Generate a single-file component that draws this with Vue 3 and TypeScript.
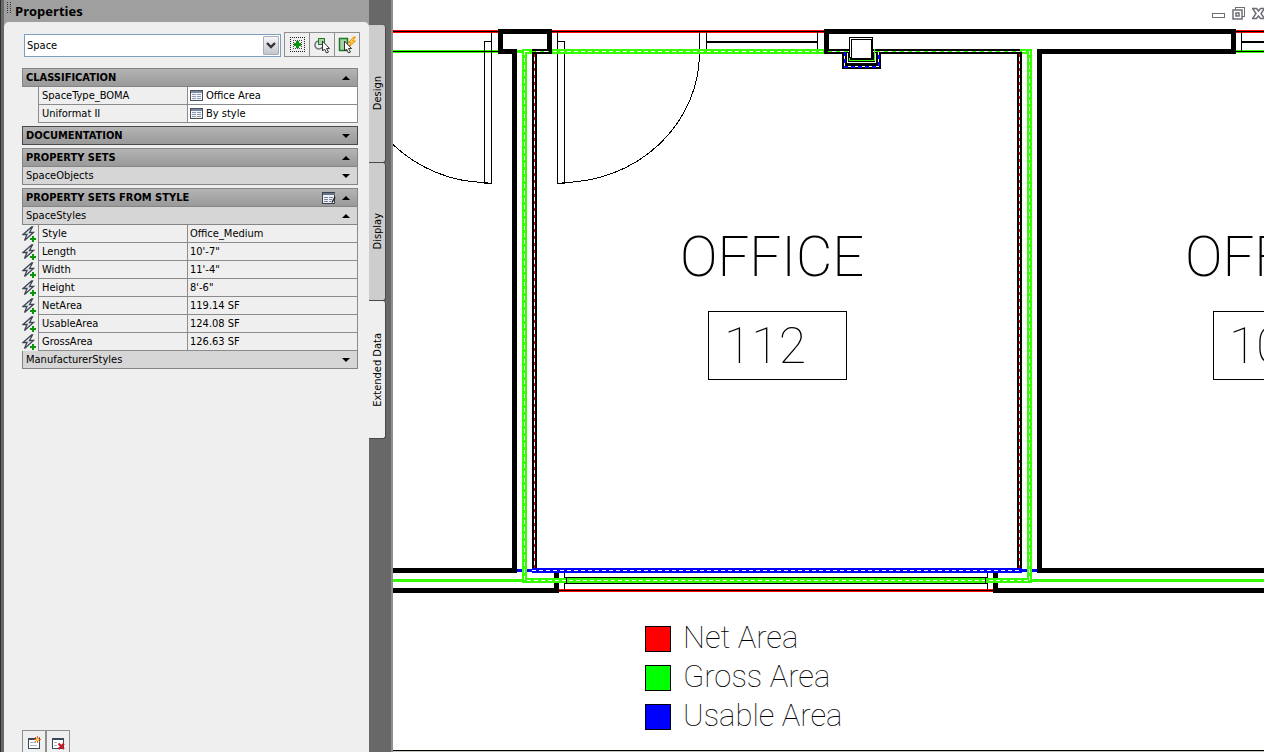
<script setup lang="ts">
import { ref } from 'vue'

interface Row { label: string; value: string }

const tabs = ['Design', 'Display', 'Extended Data']
const activeTab = ref('Extended Data')
const objectType = ref('Space')

const classification: Row[] = [
  { label: 'SpaceType_BOMA', value: 'Office Area' },
  { label: 'Uniformat II', value: 'By style' },
]

const spaceStyles: Row[] = [
  { label: 'Style', value: 'Office_Medium' },
  { label: 'Length', value: '10\'-7"' },
  { label: 'Width', value: '11\'-4"' },
  { label: 'Height', value: '8\'-6"' },
  { label: 'NetArea', value: '119.14 SF' },
  { label: 'UsableArea', value: '124.08 SF' },
  { label: 'GrossArea', value: '126.63 SF' },
]

const legend = [
  { label: 'Net Area', color: '#ff0000', y: 626 },
  { label: 'Gross Area', color: '#00ff00', y: 665 },
  { label: 'Usable Area', color: '#0000ff', y: 704 },
]
</script>

<template>
  <div class="app">
    <aside class="palette">
      <div class="main">
        <header class="title">
          <svg class="grip" width="5" height="12" aria-hidden="true" shape-rendering="crispEdges">
            <path d="M.5 0V12M3.5 0V12" stroke="#333" stroke-dasharray="1 1" />
          </svg>
          <h1>Properties</h1>
        </header>

        <div class="body">
          <div class="tools">
            <div class="combo">
              <select v-model="objectType" aria-label="Object type">
                <option>Space</option>
              </select>
              <span class="drop">
                <svg width="10" height="7" viewBox="0 0 10 7" aria-hidden="true"><path d="M1 1L5 5L9 1" fill="none" stroke="#333" stroke-width="2.4" /></svg>
              </span>
            </div>
            <div class="buttons">
              <button type="button" aria-label="Toggle pick add">
                <svg width="17" height="17" viewBox="0 0 17 17" shape-rendering="crispEdges">
                  <path d="M1 1.500H16M1 15.500H16M1.500 1V16M15.500 1V16" stroke="#222" stroke-dasharray="1 1" />
                  <path d="M4 4.500H13M4 12.500H13M4.500 4V13M12.500 4V13" stroke="#444" stroke-dasharray="1 1" />
                  <path d="M8.500 5V12M5 8.500H12" stroke="#0a960a" stroke-width="3" />
                </svg>
              </button>
              <button type="button" aria-label="Select objects">
                <svg width="18" height="18" viewBox="0 0 18 18">
                  <path d="M5.500 5A4 4 0 1 0 9 11.500" fill="none" stroke="#6f7480" stroke-width="1.500" />
                  <rect x="5.500" y="2.500" width="6" height="6" fill="#a9d3a4" stroke="#1d7a29" />
                  <path d="M9.500 5V15L11.500 13L13.500 17L15.500 16L13.500 12.500H16.500Z" fill="#fff" stroke="#333" />
                </svg>
              </button>
              <button type="button" aria-label="Quick select">
                <svg width="18" height="18" viewBox="0 0 18 18">
                  <rect x="1.500" y="2.500" width="8" height="12" fill="#a9d3a4" stroke="#1d7a29" stroke-width="1.500" />
                  <path d="M15.500 1L10.500 6.500H13L10.500 11.500L17.500 5H14.500L17.500 1Z" fill="#ffd83a" stroke="#f08a00" />
                  <path d="M6.500 5V15L8.500 13L10.500 17L12.500 16L10.500 12.500H13.500Z" fill="#fff" stroke="#333" />
                </svg>
              </button>
            </div>
          </div>

          <div class="sets">
            <section>
              <button type="button" class="head" aria-expanded="true">
                <span>CLASSIFICATION</span><i class="arrow up"></i>
              </button>
              <table>
                <tbody>
                  <tr v-for="row in classification" :key="row.label">
                    <td class="mark"></td>
                    <th scope="row">{{ row.label }}</th>
                    <td class="editable">
                      <div class="value">
                        <svg width="13" height="11" viewBox="0 0 13 11" aria-hidden="true" shape-rendering="crispEdges">
                          <rect x=".5" y=".5" width="12" height="10" fill="#f4f6fa" stroke="#4a4f58" />
                          <path d="M1 2H12" stroke="#7c89a3" stroke-width="2" />
                          <path d="M2 4.500H6M7 4.500H11M2 6.500H6M7 6.500H11M2 8.500H6M7 8.500H11" stroke="#8d9bb5" />
                        </svg>
                        {{ row.value }}
                      </div>
                    </td>
                  </tr>
                </tbody>
              </table>
            </section>

            <section>
              <button type="button" class="head dark" aria-expanded="false">
                <span>DOCUMENTATION</span><i class="arrow down"></i>
              </button>
            </section>

            <section>
              <button type="button" class="head" aria-expanded="true">
                <span>PROPERTY SETS</span><i class="arrow up"></i>
              </button>
              <button type="button" class="sub" aria-expanded="false">
                <span>SpaceObjects</span><i class="arrow down"></i>
              </button>
            </section>

            <section>
              <button type="button" class="head" aria-expanded="true">
                <span>PROPERTY SETS FROM STYLE</span>
                <svg class="sheet" width="14" height="12" viewBox="0 0 14 12" aria-hidden="true">
                  <rect x=".5" y=".5" width="12" height="11" fill="#eef0f5" stroke="#3d434d" />
                  <path d="M1 2H13" stroke="#66738c" stroke-width="2" />
                  <path d="M2 5.500H6M7 5.500H11M2 7.500H6M7 7.500H10M2 9.500H6M7 9.500H9" stroke="#7785a0" />
                  <path d="M13 5L10 10.500" stroke="#222" stroke-width="1.500" />
                </svg>
                <i class="arrow up"></i>
              </button>
              <button type="button" class="sub" aria-expanded="true">
                <span>SpaceStyles</span><i class="arrow up"></i>
              </button>
              <table>
                <tbody>
                  <tr v-for="row in spaceStyles" :key="row.label">
                    <td class="mark">
                      <svg width="15" height="17" viewBox="0 0 15 17" aria-hidden="true">
                        <path d="M9.500 1L1 8.500H5L2.500 14.500L11.500 6.500H7.500L10.500 1Z" fill="#e3e9f3" stroke="#3f4652" stroke-width="1.300" />
                        <path d="M11 10V16M8 13H14" stroke="#089608" stroke-width="2" />
                      </svg>
                    </td>
                    <th scope="row">{{ row.label }}</th>
                    <td>{{ row.value }}</td>
                  </tr>
                </tbody>
              </table>
              <button type="button" class="sub" aria-expanded="false">
                <span>ManufacturerStyles</span><i class="arrow down"></i>
              </button>
            </section>
          </div>

          <footer class="foot">
            <button type="button" aria-label="Add property sets">
              <svg width="14" height="15" viewBox="0 0 14 15">
                <rect x="1.500" y="3.500" width="11" height="10" fill="#fff" stroke="#3b4a5c" />
                <path d="M1 4H13" stroke="#3b4a5c" stroke-width="2" />
                <path d="M3 7.500H9M3 10.500H10" stroke="#aab3cb" />
                <path d="M10.500 1V8M7 4.500H14M8 2L13 7M13 2L8 7" stroke="#e8561b" />
                <circle cx="10.500" cy="4.500" r="1.500" fill="#ffe24a" />
              </svg>
            </button>
            <button type="button" aria-label="Remove property sets">
              <svg width="14" height="15" viewBox="0 0 14 15">
                <rect x="1.500" y="3.500" width="11" height="10" fill="#fff" stroke="#3b4a5c" />
                <path d="M1 4H13" stroke="#3b4a5c" stroke-width="2" />
                <path d="M3 7.500H6M3 10.500H6" stroke="#aab3cb" />
                <path d="M7.500 8.500L13 14M13 8.500L7.500 14" stroke="#c81423" stroke-width="2" />
              </svg>
            </button>
          </footer>
        </div>
      </div>

      <div class="rail" role="tablist" aria-orientation="vertical">
        <button
          v-for="tab in tabs"
          :key="tab"
          type="button"
          role="tab"
          :aria-selected="tab === activeTab"
          :class="{ active: tab === activeTab }"
          @click="activeTab = tab"
        ><span>{{ tab }}</span></button>
      </div>
    </aside>

    <main class="drawing">
      <svg class="plan" role="img" aria-label="Floor plan of office 112">
        <g transform="translate(-393 0)">
          <!-- outer wall lines -->
          <g shape-rendering="crispEdges">
            <path class="red3" d="M393 31.500H825M1236 31.500H4000" />
            <path class="thin" d="M393 31.500H825M1236 31.500H4000" />
            <path class="green3" d="M393 51.500H524M1236 51.500H4000" />
            <path class="thin" d="M393 51.500H500M1236 51.500H4000" />
            <path class="thin" d="M1241.500 32V51M699.500 32V52M706.500 32V50M817.500 32V50" />
            <path class="mid" d="M1241 42H4000M706 42H818" />
          </g>

          <!-- doors -->
          <g class="thin" shape-rendering="crispEdges">
            <path d="M491.500 32V42M557.500 32V42" />
            <rect x="484.500" y="41.500" width="7" height="142" />
            <rect x="557.500" y="41.500" width="7" height="142" />
            <path d="M699.500 53A138 130 0 0 1 561.500 182.500M349.500 42A138 140 0 0 0 487.500 182.500" />
          </g>

          <!-- walls -->
          <g class="wall" shape-rendering="crispEdges">
            <path d="M512 51.500H500.500V31.500H549.500V54" />
            <path d="M514.500 49V570.500H393" />
            <path d="M826.500 54V31.500H1233.500V51.500H1039.500V570.500H4000" />
            <path d="M393 590.500H556.500V572" />
            <path d="M4000 590.500H995.500V572" />
          </g>

          <!-- window in the lower wall -->
          <g shape-rendering="crispEdges">
            <path class="red3" d="M559 590.500H993" />
            <path class="thin" d="M559 590.500H993M564.500 572V590M987.500 572V590" />
            <path class="green3" d="M393 580.500H524M1030 580.500H4000" />
          </g>

          <!-- gross area boundary -->
          <g shape-rendering="crispEdges">
            <path class="green5" d="M524.500 51.500H1029.500V580.500H524.500Z" />
            <path class="dash" d="M524.500 51.500H1029.500V580.500H524.500Z" />
            <path class="thin" d="M565 577.500H987M565 583.500H987M566.500 577V584M985.500 577V584" />
          </g>

          <!-- net and usable area boundaries -->
          <g shape-rendering="crispEdges">
            <path class="wall" d="M532 51.500H552M824 51.500H1020" />
            <path class="wall" d="M534.500 52V568M1019.500 52V568" />
            <path class="white1" d="M534.500 54V568M1019.500 54V568" />
            <path class="red-dash" d="M534.500 54V568M1019.500 54V568" />
            <path class="white1" d="M532 51.500H549M828 51.500H1020" />
            <path class="green-dash" d="M532 51.500H549M828 51.500H1020" />
            <path class="blue3" d="M517 570.500H522M527 570.500H532M1022 570.500H1027M1032 570.500H1037" />
            <path class="blue5" d="M532 570.500H1022" />
            <path class="dash" d="M532 570.500H1022" />
          </g>

          <!-- column in the upper wall -->
          <g shape-rendering="crispEdges">
            <path class="wall" d="M844.500 52V66.500H878.500V52" />
            <path class="white1" d="M844.500 52V66.500H878.500V52" />
            <path class="blue-dash" d="M844.500 52V66.500H878.500V52" />
            <rect x="847" y="53" width="29" height="11" />
            <path class="white1" d="M847.500 53V62.500H875.500V53" />
            <path class="green-line" d="M849.500 49V60.500H874.500V49" />
            <rect x="849.500" y="37.500" width="23" height="20" class="paper" />
            <rect x="851.500" y="39.500" width="20" height="19" class="paper" />
          </g>

          <!-- room tags -->
          <text class="room" x="680" y="276">OFFICE</text>
          <text class="room" x="1185" y="276">OFFICE</text>
          <g class="thin" shape-rendering="crispEdges">
            <rect x="708.500" y="311.500" width="138" height="68" />
            <rect x="1213.500" y="311.500" width="138" height="68" />
          </g>
          <text class="number" x="724" y="363">112</text>
          <text class="number" x="1229" y="363">108</text>

          <!-- legend -->
          <g v-for="item in legend" :key="item.label">
            <rect x="645.500" :y="item.y + 0.5" width="25" height="25" :fill="item.color" stroke="#000" shape-rendering="crispEdges" />
            <text class="legend" x="683" :y="item.y + 22">{{ item.label }}</text>
          </g>
        </g>
      </svg>

      <div class="window-buttons">
        <button type="button" aria-label="Minimize">
          <svg width="13" height="13"><rect x=".5" y="6.500" width="12" height="4" fill="#fff" stroke="#6d6d76" /></svg>
        </button>
        <button type="button" aria-label="Restore">
          <svg width="13" height="13">
            <rect x="3.500" y=".5" width="9" height="9" fill="#fff" stroke="#6d6d76" />
            <rect x="1" y="3" width="9" height="9" fill="#fff" stroke="#6d6d76" stroke-width="1.500" />
            <rect x="4" y="6" width="3" height="3" fill="none" stroke="#6d6d76" stroke-width="1.500" />
          </svg>
        </button>
        <button type="button" aria-label="Close">
          <svg width="13" height="13">
            <path d="M.5 1.500H4.500L6.500 4L8.500 1.500H12.500L9 6.500L12.500 11.500H8.500L6.500 9L4.500 11.500H.5L4 6.500Z" fill="#fff" stroke="#6d6d76" stroke-width="1.500" />
          </svg>
        </button>
      </div>
    </main>
  </div>
</template>

<style>
html,
body {
  margin: 0;
  overflow: hidden;
}
</style>

<style scoped>
.app {
  display: flex;
  height: 100vh;
  background: #fff;
  color: #000;
  font-family: "DejaVu Sans Condensed", "DejaVu Sans", sans-serif;
  font-size: 11px;
  line-height: 16px;
}

button,
select {
  box-sizing: border-box;
  margin: 0;
  padding: 0;
  border: 0;
  border-radius: 0;
  background: none;
  color: inherit;
  font: inherit;
}

svg {
  display: block;
}

.palette {
  display: flex;
  flex: 0 0 auto;
  box-sizing: border-box;
  width: 393px;
  border-left: 1px solid #2e2e2e;
  background: #686868;
}

.main {
  display: flex;
  flex: 1;
  flex-direction: column;
  margin-left: 3px;
  background: #9f9f9f;
}

.title {
  display: flex;
  gap: 3px;
  height: 22px;
  padding-left: 3px;
}

.grip {
  margin-top: 2px;
}

h1 {
  margin: 0;
  font-family: "Open Sans", sans-serif;
  font-size: 13px;
  font-weight: 700;
  line-height: 22px;
}

.body {
  display: flex;
  flex: 1;
  flex-direction: column;
  border-radius: 5px 5px 0 0;
  background: #efefef;
}

.tools {
  display: flex;
  align-items: flex-end;
  gap: 3px;
  padding: 10px 9px 0 20px;
}

.combo {
  position: relative;
  flex: 1;
}

.combo select {
  display: block;
  width: 100%;
  height: 23px;
  padding-left: 2px;
  border: 1px solid #7b9ebd;
  appearance: none;
  background: #fff;
}

.drop {
  position: absolute;
  top: 2px;
  right: 2px;
  bottom: 2px;
  display: flex;
  align-items: center;
  justify-content: center;
  width: 14px;
  border: 1px solid #a9adb8;
  border-radius: 1px;
  background: linear-gradient(#f6f6f8, #c4c6cf);
  pointer-events: none;
}

.buttons {
  display: flex;
  border: 1px solid #8f8f8f;
}

.buttons button {
  display: flex;
  align-items: center;
  justify-content: center;
  width: 25px;
  height: 23px;
}

.buttons button:first-child {
  width: 24px;
}

.buttons button + button {
  border-left: 1px solid #8f8f8f;
}

.sets {
  display: flex;
  flex: 1;
  flex-direction: column;
  gap: 3px;
  padding: 11px 11px 0 18px;
}

.head,
.sub {
  display: flex;
  align-items: center;
  width: 100%;
  padding: 0 7px 0 3px;
  border: 1px solid #858585;
  text-align: left;
}

.head {
  height: 19px;
  background: linear-gradient(#b4b4b4, #999);
  font-weight: 700;
}

.head.dark {
  border-color: #4a4a4a;
}

.sub {
  height: 18px;
  border-top: 0;
  background: #d6d6d6;
}

.head span,
.sub span {
  flex: 1;
}

.sheet {
  margin-right: 6px;
}

.arrow {
  width: 0;
  height: 0;
  border: 4px solid transparent;
}

.arrow.up {
  border-top: 0;
  border-bottom-color: #000;
}

.arrow.down {
  border-bottom: 0;
  border-top-color: #000;
}

table {
  width: 100%;
  border-collapse: separate;
  border-spacing: 0;
  table-layout: fixed;
}

th,
td {
  box-sizing: border-box;
  height: 18px;
  padding: 0 0 0 2px;
  border-bottom: 1px solid #8b8b8b;
  border-left: 1px solid #8b8b8b;
  font-weight: 400;
  line-height: 17px;
  text-align: left;
}

th {
  width: 149px;
  padding-left: 3px;
}

td:last-child {
  border-right: 1px solid #8b8b8b;
}

td.mark {
  width: 16px;
  padding: 0;
  border: 0;
}

td.editable {
  background: #fff;
}

.value {
  display: flex;
  align-items: center;
  gap: 3px;
}

.foot {
  display: flex;
  padding-left: 18px;
}

.foot button {
  display: flex;
  justify-content: center;
  width: 24px;
  height: 22px;
  padding-top: 4px;
  border: 1px solid #8f8f8f;
  border-bottom: 0;
}

.rail {
  display: flex;
  flex-direction: column;
  box-sizing: border-box;
  width: 24px;
  padding: 25px 6px 0 0;
  border-right: 2px solid #8f8f8f;
}

.rail button {
  display: flex;
  align-items: center;
  justify-content: center;
  width: 17px;
  height: 138px;
  padding-left: 2px;
  border-right: 1px solid #4a4a4a;
  border-bottom: 1px solid #4a4a4a;
  border-radius: 0 3px 3px 0;
  background: #cdcdcd;
}

.rail button.active {
  background: #efefef;
}

.rail span {
  writing-mode: vertical-rl;
  transform: rotate(180deg);
  white-space: nowrap;
}

.drawing {
  position: relative;
  flex: 1;
  min-width: 0;
  overflow: hidden;
  box-sizing: border-box;
  border-bottom: 1px solid #c8c4bc;
  box-shadow: inset 0 -1px #000;
}

.plan {
  width: 100%;
  height: 100%;
}

.thin {
  fill: none;
  stroke: #000;
  stroke-width: 1;
}

.mid {
  fill: none;
  stroke: #000;
  stroke-width: 2;
}

.wall {
  fill: none;
  stroke: #000;
  stroke-width: 5;
}

.red3 {
  stroke: #f00;
  stroke-width: 3;
}

.green3 {
  stroke: #3f0;
  stroke-width: 3;
}

.green5 {
  fill: none;
  stroke: #3f0;
  stroke-width: 5;
}

.blue3 {
  stroke: #00f;
  stroke-width: 3;
}

.blue5 {
  stroke: #00f;
  stroke-width: 5;
}

.white1 {
  fill: none;
  stroke: #fff;
  stroke-width: 1;
}

.dash {
  fill: none;
  stroke: #fff;
  stroke-width: 1;
  stroke-dasharray: 4 3;
}

.red-dash {
  fill: none;
  stroke: #f00;
  stroke-width: 1;
  stroke-dasharray: 3 4;
}

.green-dash,
.green-line {
  fill: none;
  stroke: #3f0;
  stroke-width: 1;
  stroke-dasharray: 4 4;
}

.green-line {
  stroke-dasharray: none;
}

.blue-dash {
  fill: none;
  stroke: #00f;
  stroke-width: 2;
  stroke-dasharray: 4 3;
}

.paper {
  fill: #fff;
  stroke: #000;
}

.room {
  font-family: Roboto, sans-serif;
  font-size: 56px;
  font-weight: 200;
}

.number {
  font-family: Roboto, sans-serif;
  font-size: 50px;
  font-weight: 100;
}

.legend {
  font-family: Roboto, sans-serif;
  font-size: 31px;
  font-weight: 100;
}

.window-buttons {
  position: absolute;
  top: 7px;
  right: -1px;
  display: flex;
  gap: 7px;
}
</style>
